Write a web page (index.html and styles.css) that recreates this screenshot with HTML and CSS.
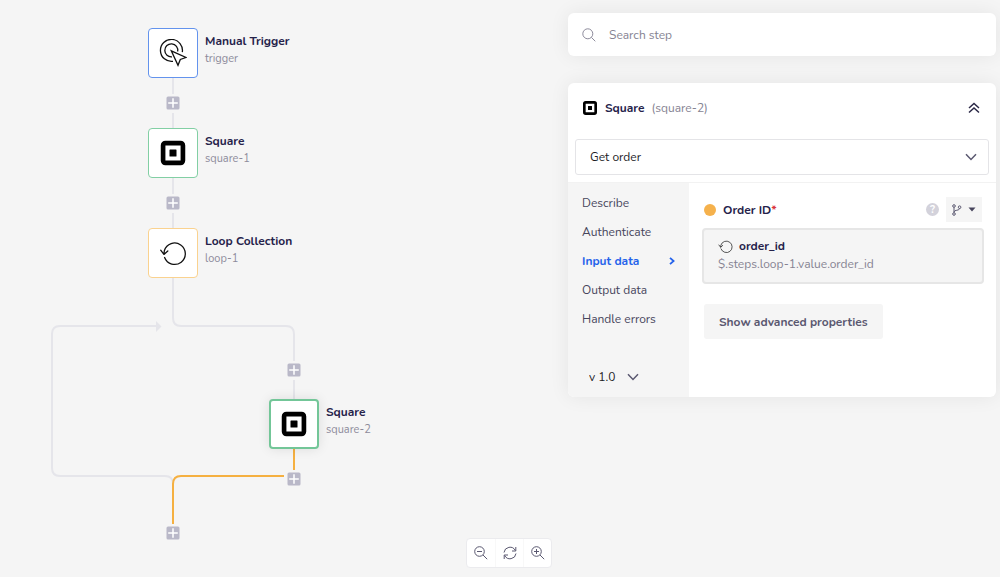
FILE: index.html
```html
<!DOCTYPE html>
<html lang="en">
<head>
    <meta charset="UTF-8">
    <meta name="viewport" content="width=device-width, initial-scale=1.0">
    <title>Flow designer</title>
    <link rel="stylesheet" href="styles.css">
</head>
<body>
    <!-- Shared icons -->
    <svg class="icon-defs" aria-hidden="true">
        <symbol id="icon-square" viewBox="0 0 24 24">
            <rect x="3.500" y="3.500" width="17" height="17" rx="2" fill="none" stroke="#000" stroke-width="4"/>
            <rect x="9" y="9" width="6" height="6" rx="0.500" fill="#000"/>
        </symbol>
        <symbol id="icon-loop" viewBox="0 0 28 28">
            <path d="M5.600 18.500A10.700 10.700 0 1 0 5.400 11.500L4.900 15M1.700 11.200L4.900 15.400L8.800 12" fill="none" stroke="#111" stroke-width="1.300" stroke-linecap="round" stroke-linejoin="round"/>
        </symbol>
        <symbol id="icon-plus" viewBox="0 0 14 14">
            <rect x="0.500" y="0.500" width="13" height="13" rx="1.500" fill="#b9b8c8"/>
            <path d="M7 2.200V11.800M2.200 7H11.800" stroke="#fff" stroke-width="1.500"/>
        </symbol>
        <symbol id="icon-chevron" viewBox="0 0 12 8">
            <path d="M1 1.200L6 6.400L11 1.200" fill="none" stroke="#5a5870" stroke-width="1.500"/>
        </symbol>
    </svg>

    <div class="designer">
        <!-- Flow diagram -->
        <main class="canvas">
            <svg class="edges" width="400" height="560" fill="none" stroke="#e5e5ea" stroke-width="2" aria-hidden="true">
                <path d="M173 78V94M173 113V128M173 178V194M173 213V228"/>
                <path d="M173 278V318Q173 326 181 326H286Q294 326 294 334V361M294 380V400"/>
                <path d="M156 326H60Q52 326 52 334V468Q52 476 60 476H165Q173 476 173 484"/>
                <path d="M156 321L161.500 326.500L156 332Z" fill="#e5e5ea" stroke="none"/>
                <path d="M294 449V470M284 476H181Q173 476 173 484V524" stroke="#f5b041"/>
            </svg>

            <div class="node node-trigger">
                <button class="node-box blue" aria-label="Manual Trigger">
                    <svg width="28" height="28" viewBox="0 0 28 28" fill="none" stroke="#111" stroke-width="1.300">
                        <path d="M14 22.300A11 11 0 1 1 23.300 13.200"/>
                        <path d="M13 17.800A6.500 6.500 0 1 1 18.700 12.500"/>
                        <path d="M12.300 11.800L27 18.500L21.300 20.500L19 26.300Z"/>
                    </svg>
                </button>
                <div class="node-text"><strong>Manual Trigger</strong><span>trigger</span></div>
            </div>
            <div class="node node-square-1">
                <button class="node-box green" aria-label="Square 1"><svg width="28" height="28"><use href="#icon-square"/></svg></button>
                <div class="node-text"><strong>Square</strong><span>square-1</span></div>
            </div>
            <div class="node node-loop">
                <button class="node-box orange" aria-label="Loop Collection"><svg width="28" height="28"><use href="#icon-loop"/></svg></button>
                <div class="node-text"><strong>Loop Collection</strong><span>loop-1</span></div>
            </div>
            <div class="node node-square-2">
                <button class="node-box green selected" aria-label="Square 2"><svg width="28" height="28"><use href="#icon-square"/></svg></button>
                <div class="node-text"><strong>Square</strong><span>square-2</span></div>
            </div>

            <button class="add add-1" aria-label="Add step"><svg width="14" height="14"><use href="#icon-plus"/></svg></button>
            <button class="add add-2" aria-label="Add step"><svg width="14" height="14"><use href="#icon-plus"/></svg></button>
            <button class="add add-3" aria-label="Add step"><svg width="14" height="14"><use href="#icon-plus"/></svg></button>
            <button class="add add-4" aria-label="Add step"><svg width="14" height="14"><use href="#icon-plus"/></svg></button>
            <button class="add add-5" aria-label="Add step"><svg width="14" height="14"><use href="#icon-plus"/></svg></button>
        </main>

        <!-- Step settings -->
        <aside class="panel">
            <label class="search">
                <svg width="14" height="14" viewBox="0 0 14 14" fill="none" stroke="#8d8b9b"><circle cx="5.800" cy="5.800" r="5"/><path d="M9.400 9.400L13.300 13.300"/></svg>
                <input type="search" placeholder="Search step" aria-label="Search step">
            </label>

            <section class="card">
                <header class="card-head">
                    <svg width="16" height="16"><use href="#icon-square"/></svg>
                    <h2>Square</h2>
                    <span class="step-id">(square-2)</span>
                    <button class="collapse" aria-label="Collapse">
                        <svg width="12" height="12" viewBox="0 0 12 12" fill="none" stroke="#2b2846" stroke-width="1.500"><path d="M1 6L6 1.500L11 6M1 10.500L6 6L11 10.500"/></svg>
                    </button>
                </header>

                <div class="select action">
                    <select aria-label="Action"><option>Get order</option></select>
                    <svg width="12" height="8"><use href="#icon-chevron"/></svg>
                </div>

                <div class="card-body">
                    <div class="side">
                        <nav class="tabs">
                            <a href="#">Describe</a>
                            <a href="#">Authenticate</a>
                            <a href="#" class="active">Input data
                                <svg width="6" height="8" viewBox="0 0 6 8" fill="none" stroke="#2563eb" stroke-width="1.800"><path d="M1 0.800L4.600 4L1 7.200"/></svg>
                            </a>
                            <a href="#">Output data</a>
                            <a href="#">Handle errors</a>
                        </nav>
                        <div class="select version">
                            <select aria-label="Version"><option>v 1.0</option></select>
                            <svg width="12" height="8"><use href="#icon-chevron"/></svg>
                        </div>
                    </div>

                    <div class="fields">
                        <div class="field-head">
                            <span class="dot"></span>
                            <label for="orderId">Order ID<span class="required">*</span></label>
                            <button class="help" aria-label="Help">?</button>
                            <button class="mode" aria-label="Input mode">
                                <svg width="10" height="12" viewBox="0 0 10 12" fill="none" stroke="#5a5870"><circle cx="2" cy="2" r="1.300"/><circle cx="2" cy="10" r="1.300"/><circle cx="7.600" cy="3.200" r="1.300"/><path d="M2 3.300V8.700M7.600 4.500C7.600 7 2 5.500 2 8"/></svg>
                                <svg width="8" height="5" viewBox="0 0 8 5"><path d="M0.500 0.500H7.500L4 4.500Z" fill="#47455c"/></svg>
                            </button>
                        </div>
                        <button class="value" id="orderId">
                            <span class="value-name"><svg width="15" height="15"><use href="#icon-loop"/></svg>order_id</span>
                            <span class="value-path">$.steps.loop-1.value.order_id</span>
                        </button>
                        <button class="advanced">Show advanced properties</button>
                    </div>
                </div>
            </section>
        </aside>

        <!-- Zoom controls -->
        <div class="zoom-bar">
            <button aria-label="Zoom out"><svg width="14" height="14" viewBox="0 0 14 14"><circle cx="5.500" cy="5.500" r="4.800"/><path d="M9 9L13.200 13.200M3 5.500H8"/></svg></button>
            <button aria-label="Reset"><svg width="14" height="14" viewBox="0 0 14 14"><path d="M1 6.500A6 6 0 0 1 12.300 4.500M12.800 1V5H9M13 7.500A6 6 0 0 1 1.700 9.500M1.200 13V9H5"/></svg></button>
            <button aria-label="Zoom in"><svg width="14" height="14" viewBox="0 0 14 14"><circle cx="5.500" cy="5.500" r="4.800"/><path d="M9 9L13.200 13.200M3 5.500H8M5.500 3V8"/></svg></button>
        </div>
    </div>
</body>
</html>
```
FILE: styles.css
```css
* {
    box-sizing: border-box;
}
body {
    margin: 0;
    background-color: #f5f5f5;
    color: #25224a;
    font-family: Nunito, Lato, sans-serif;
    font-size: 12px;
    line-height: 18px;
}
button,
input,
select {
    margin: 0;
    padding: 0;
    border: none;
    background: none;
    color: inherit;
    font: inherit;
}
button {
    cursor: pointer;
}
svg {
    display: block;
    flex: none;
}
.icon-defs {
    position: absolute;
    width: 0;
    height: 0;
}
.designer {
    position: relative;
    display: flex;
    min-height: 100vh;
}

/* Flow diagram: nodes sit freely on the canvas */
.canvas {
    position: relative;
    flex: 1;
}
.edges {
    position: absolute;
    top: 0;
    left: 0;
}
.node {
    position: absolute;
    display: flex;
    gap: 7px;
}
.node-trigger { left: 148px; top: 28px; }
.node-square-1 { left: 148px; top: 128px; }
.node-loop { left: 148px; top: 228px; }
.node-square-2 { left: 269px; top: 399px; }
.node-box {
    display: flex;
    align-items: center;
    justify-content: center;
    width: 50px;
    height: 50px;
    border: 1px solid;
    border-radius: 4px;
    background-color: #fff;
}
.blue { border-color: #6393ed; }
.green { border-color: #82cfa4; }
.orange { border-color: #fad28f; }
.selected {
    border-width: 2px;
    border-color: #73c698;
    box-shadow: 0 0 12px rgba(0, 0, 0, 0.1);
}
.node-text {
    display: flex;
    flex-direction: column;
    padding-top: 4px;
    white-space: nowrap;
}
.node-text span {
    color: #8d8b9b;
    font-size: 11px;
}
.add {
    position: absolute;
}
.add-1 { left: 166px; top: 96px; }
.add-2 { left: 166px; top: 196px; }
.add-3 { left: 287px; top: 363px; }
.add-4 { left: 287px; top: 472px; }
.add-5 { left: 166px; top: 526px; }

/* Floating zoom controls */
.zoom-bar {
    position: absolute;
    left: 466px;
    bottom: 9px;
    display: flex;
    border: 1px solid #ebebee;
    border-radius: 4px;
    background-color: #fff;
}
.zoom-bar button {
    display: flex;
    align-items: center;
    justify-content: center;
    width: 28px;
    height: 28px;
}
.zoom-bar svg {
    fill: none;
    stroke: #5a5870;
}
.zoom-bar button + button {
    border-left: 1px solid #f8f8f8;
}

/* Settings panel */
.panel {
    display: flex;
    flex-direction: column;
    gap: 27px;
    width: 432px;
    padding: 13px 4px 13px 0;
}
.search,
.card {
    border-radius: 6px;
    background-color: #fff;
    box-shadow: 0 0 20px rgba(0, 0, 0, 0.07);
}
.search {
    display: flex;
    align-items: center;
    gap: 13px;
    height: 43px;
    padding: 0 14px;
}
.search input {
    flex: 1;
    outline: none;
}
.search input::placeholder {
    color: #858392;
    opacity: 1;
}
.card {
    overflow: hidden;
}
.card-head {
    display: flex;
    align-items: center;
    gap: 7px;
    height: 49px;
    padding: 0 16px 0 14px;
}
.card-head h2 {
    margin: 0;
    font-size: 12px;
}
.step-id {
    color: #858392;
}
.collapse {
    margin-left: auto;
}

/* Drop-downs with the chevron laid over the right end */
.select {
    display: grid;
    align-items: center;
}
.select select,
.select svg {
    grid-area: 1 / 1;
}
.select select {
    width: 100%;
    height: 100%;
    appearance: none;
}
.select svg {
    justify-self: end;
    pointer-events: none;
}
.action {
    height: 36px;
    margin: 7px;
    border: 1px solid #e4e4e7;
    border-radius: 3px;
    color: #1b1b1f;
}
.action select {
    padding: 0 14px;
}
.action svg {
    margin-right: 11px;
}
.card-body {
    display: flex;
    border-top: 1px solid #f2f2f2;
}
.side {
    display: flex;
    flex-direction: column;
    justify-content: space-between;
    width: 121px;
    padding: 5px 14px 11px;
    background-color: #f5f5f5;
}
.tabs a {
    display: flex;
    align-items: center;
    justify-content: space-between;
    height: 29px;
    color: #47455c;
    text-decoration: none;
}
.tabs .active {
    color: #2563eb;
    font-weight: bold;
}
.version {
    width: 57px;
    height: 18px;
    color: #1b1b1f;
}
.version select {
    padding-left: 7px;
}
.fields {
    flex: 1;
    min-height: 214px;
    padding: 14px 12px 14px 13px;
}
.field-head {
    display: flex;
    align-items: center;
    gap: 7px;
    padding: 0 2px;
    font-weight: bold;
}
.dot {
    width: 12px;
    height: 12px;
    border-radius: 50%;
    background-color: #f5b14c;
}
.required {
    color: #d9363e;
}
.help {
    width: 13px;
    height: 13px;
    margin-left: auto;
    border-radius: 50%;
    background-color: #d3d2db;
    color: #fff;
    font-size: 11px;
    font-weight: bold;
    line-height: 13px;
}
.mode {
    display: flex;
    align-items: center;
    justify-content: center;
    gap: 6px;
    width: 36px;
    height: 25px;
    background-color: #f5f5f5;
}
.value {
    display: flex;
    flex-direction: column;
    width: 100%;
    margin: 6px 0 20px;
    padding: 7px 14px 9px;
    border: 2px solid #e6e6e6;
    border-radius: 4px;
    background-color: #f5f5f5;
    text-align: left;
}
.value-name {
    display: flex;
    align-items: center;
    gap: 6px;
    font-weight: bold;
}
.value-path {
    color: #858392;
}
.advanced {
    height: 35px;
    margin-left: 2px;
    padding: 0 15px;
    border-radius: 3px;
    background-color: #f5f5f5;
    color: #5a5870;
    font-weight: bold;
}
```
